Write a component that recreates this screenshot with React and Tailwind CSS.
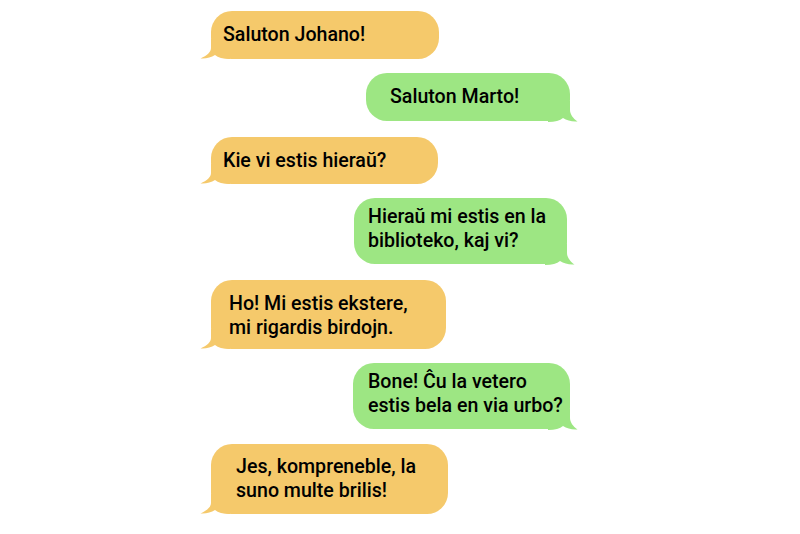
import React from "react"

const YELLOW = "#F5C96B"
const GREEN = "#9DE683"

function Tail({ side, color }) {
  if (side === "left") {
    return (
      <svg className="absolute left-[-11px] bottom-0" width="30" height="20" viewBox="0 0 30 20">
        <path d="M11 0 L11 9 C11 13 7 16.5 0.5 19.5 C6 20 11 18.5 15 16 C18 18.5 23 20 30 20 L30 0 Z" fill={color} />
      </svg>
    )
  }
  return (
    <svg className="absolute right-[-8px] bottom-[-1px]" width="30" height="21" viewBox="0 0 30 21">
      <path d="M22 0 L22 9 C22 13 25 17.5 29.5 20.5 C24 21 19 19.5 15 17 C12 19.5 7 21 0 21 L0 0 Z" fill={color} />
    </svg>
  )
}

const messages = [
  { side: "left", lines: ["Saluton Johano!"], w: "w-[228px]", h: "h-[48px]", pl: "pl-[12px]", pt: "pt-[12px]", mt: "mt-[11px]" },
  { side: "right", lines: ["Saluton Marto!"], w: "w-[204px]", h: "h-[48px]", pl: "pl-[24px]", pt: "pt-[12px]", mt: "mt-[14px]", mr: "mr-0" },
  { side: "left", lines: ["Kie vi estis hieraŭ?"], w: "w-[227px]", h: "h-[47px]", pl: "pl-[12px]", pt: "pt-[12px]", mt: "mt-[16px]" },
  { side: "right", lines: ["Hieraŭ mi estis en la", "biblioteko, kaj vi?"], w: "w-[213px]", h: "h-[66px]", pl: "pl-[14px]", pt: "pt-[7px]", mt: "mt-[14px]", mr: "mr-[3px]" },
  { side: "left", lines: ["Ho! Mi estis ekstere,", "mi rigardis birdojn."], w: "w-[235px]", h: "h-[69px]", pl: "pl-[18px]", pt: "pt-[12px]", mt: "mt-[16px]" },
  { side: "right", lines: ["Bone! Ĉu la vetero", "estis bela en via urbo?"], w: "w-[217px]", h: "h-[66px]", pl: "pl-[15px]", pt: "pt-[7px]", mt: "mt-[14px]", mr: "mr-0" },
  { side: "left", lines: ["Jes, kompreneble, la", "suno multe brilis!"], w: "w-[237px]", h: "h-[70px]", pl: "pl-[25px]", pt: "pt-[11px]", mt: "mt-[15px]" },
]

export default function App() {
  return (
    <div className="w-[800px] h-[534px] bg-white overflow-hidden font-['Roboto',sans-serif]">
      <div className="ml-[211px] w-[359px] flex flex-col">
        {messages.map((m, i) => {
          const color = m.side === "left" ? YELLOW : GREEN
          return (
            <div
              key={i}
              className={`relative rounded-[21px] ${m.w} ${m.h} ${m.pl} ${m.pt} ${m.mt} ${
                m.side === "left" ? "self-start bg-[#F5C96B]" : `self-end bg-[#9DE683] ${m.mr}`
              }`}
            >
              <Tail side={m.side} color={color} />
              <div className="relative text-[19.6px] leading-[24px] font-medium text-black">
                {m.lines.map((l, j) => (
                  <div key={j} className="whitespace-nowrap">{l}</div>
                ))}
              </div>
            </div>
          )
        })}
      </div>
    </div>
  )
}
